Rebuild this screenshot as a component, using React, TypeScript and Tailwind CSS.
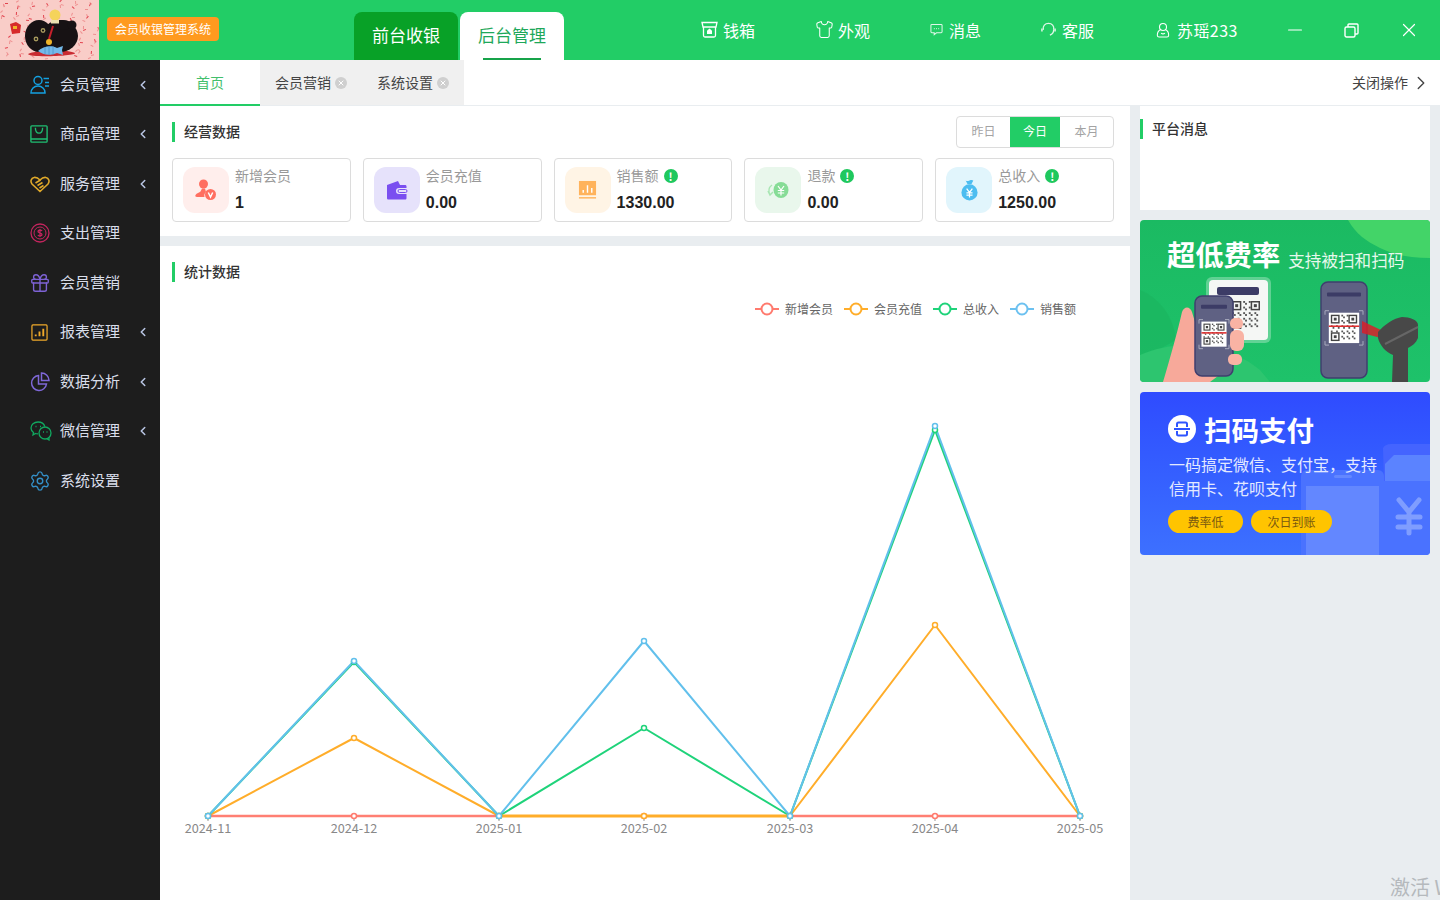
import { Minus, X, ChevronRight, ChevronLeft, Shirt, Settings, Gift } from 'lucide-react';
import type { ReactNode } from 'react';

const confetti = Array.from({ length: 110 }, (_, i) => ({
  x: (i * 37 + 5) % 99,
  y: (i * 23 + 3) % 60,
  r: (i * 31) % 360,
}));

const CatLogo = () => (
  <svg viewBox="0 0 99 60" className="w-[99px] h-[60px] shrink-0 block">
    <rect width="99" height="60" fill="#f9cdc8" />
    {confetti.map((c, i) => (
      <rect
        key={i}
        x={c.x}
        y={c.y}
        width="3"
        height="1"
        fill={i % 3 === 0 ? '#e2434f' : '#ee9090'}
        transform={`rotate(${c.r} ${c.x} ${c.y})`}
      />
    ))}
    <path d="M10 24l6-2 5 3-1 8-8 1z" fill="#d62a2a" />
    <rect x="13" y="26" width="4" height="3" fill="#f0b429" />
    <path d="M28 54c6-4 40-5 47-1 2 3-46 5-47 1z" fill="#c92b32" />
    <ellipse cx="39" cy="36" rx="14" ry="16" fill="#171214" />
    <ellipse cx="60" cy="36" rx="18" ry="16" fill="#171214" />
    <ellipse cx="62" cy="25" rx="11" ry="5" fill="#171214" />
    <circle cx="72" cy="25" r="4.500" fill="#171214" />
    <circle cx="43" cy="30.500" r="2.400" fill="#a89a5e" /><circle cx="43" cy="30.500" r="1.100" fill="#111" />
    <circle cx="36" cy="39" r="2.400" fill="#a89a5e" /><circle cx="36" cy="39" r="1.100" fill="#111" />
    <path d="M53 26l-4 13" stroke="#c8202c" strokeWidth="2" />
    <circle cx="49" cy="42" r="3" fill="#f0b429" />
    <circle cx="55" cy="15" r="5.500" fill="#f5d35a" /><rect x="51" y="20" width="8" height="3.500" fill="#e9e2b0" />
    <path d="M38 51c5-5 14-6 19-3l6-2-1 4 1 5-6-2c-7 3-14 2-19-2z" fill="#74b9ea" />
    <path d="M45 47v7M49 46v9M53 46v9" stroke="#4f93c9" strokeWidth="0.800" />
  </svg>
);

const DrawerIcon = () => (
  <svg viewBox="0 0 17 17" className="w-[17px] h-[17px]" fill="none" stroke="#fff" strokeWidth="1.300">
    <path d="M1 1.500h15l-1 4.500H2z" />
    <path d="M2.500 6v8.500a1.500 1.500 0 0 0 1.500 1.500h9a1.500 1.500 0 0 0 1.500-1.500V6" />
    <path d="M8.500 7.500l2.500 2.200v3.300H6V9.700z" fill="#fff" stroke="none" />
  </svg>
);
const ChatIcon = () => (
  <svg viewBox="0 0 14 14" className="w-[13px] h-[13px]" fill="none" stroke="#dff7e8" strokeWidth="1.100">
    <path d="M2 1.500h10a1 1 0 0 1 1 1v7a1 1 0 0 1-1 1H7l-2.500 2v-2H2a1 1 0 0 1-1-1v-7a1 1 0 0 1 1-1z" />
    <path d="M4.200 6h.8M6.600 6h.8M9 6h.8" strokeWidth="1.300" />
  </svg>
);
const HeadsetIcon = () => (
  <svg viewBox="0 0 16 16" className="w-[15px] h-[15px]" fill="none" stroke="#dff7e8" strokeWidth="1.400">
    <path d="M2.500 8.500C1.500 4 4.500 1.500 8 1.500s6.500 2.500 5.500 7" />
    <path d="M13.500 8.500c0 2.800-1.500 4.500-4 5.500" />
    <path d="M1 7v3M15 7v3" strokeWidth="1.600" />
  </svg>
);
const PersonIcon = () => (
  <svg viewBox="0 0 16 18" className="w-[14px] h-[16px]" fill="none" stroke="#fff" strokeWidth="1.200">
    <circle cx="8" cy="5.500" r="4" />
    <path d="M5.500 8.500C3 9.500 1.500 12 1.500 15c0 1.500 1 2 2 2h9c1 0 2-.5 2-2 0-3-1.500-5.500-4-6.500" />
    <path d="M5.800 12.500c1.200 1 3.200 1 4.400 0" />
  </svg>
);
const RestoreIcon = () => (
  <svg viewBox="0 0 15 15" className="w-[15px] h-[15px]" fill="none" stroke="#fff" strokeWidth="1.400">
    <rect x="1" y="4" width="10" height="10" rx="1.500" />
    <path d="M4 4V2a1 1 0 0 1 1-1h8a1 1 0 0 1 1 1v8a1 1 0 0 1-1 1h-2" />
  </svg>
);

const sideIcons: Record<string, ReactNode> = {
  member: (
    <svg viewBox="0 0 20 20" className="w-5 h-5" fill="none" stroke="#14a0e0" strokeWidth="1.500">
      <circle cx="8" cy="5.500" r="4" />
      <path d="M1 18c0-4 3-7 7-7s7 3 7 6.500V18z" />
      <path d="M13.500 3.500H19M15 7.500h4M15 11h4" />
    </svg>
  ),
  goods: (
    <svg viewBox="0 0 20 20" className="w-[18px] h-[18px]" fill="none" stroke="#1fbf72" strokeWidth="1.500">
      <rect x="1" y="1" width="18" height="18" rx="1" />
      <path d="M1 15.500h18M6 3c0 8 8 8 8 0" />
    </svg>
  ),
  service: (
    <svg viewBox="0 0 20 20" className="w-5 h-5" fill="none" stroke="#e0a92a" strokeWidth="1.600">
      <path d="M10 17.500L2 10c-2-2.500-.8-6 2-6.500 2.300-.5 4 .5 6 2.500 2-2 3.800-3 6-2.500 2.800.5 4 4 2 6.500z" />
      <path d="M5.500 9l5-3M7.500 11.500l5-3M9.500 14l4-2.500" />
    </svg>
  ),
  expense: (
    <svg viewBox="0 0 20 20" className="w-5 h-5" fill="none" stroke="#c3255e" strokeWidth="1.300">
      <circle cx="10" cy="10" r="9" />
      <circle cx="10" cy="10" r="6" strokeWidth="1" />
      <path d="M12 8c-.5-1-3.500-1.300-4 .2-.5 2 4 1.500 4 3.500 0 1.500-3.500 1.500-4 .2M10 6v8" />
    </svg>
  ),
  gift: <Gift size={22} color="#7d62d4" strokeWidth={1.500} className="-ml-[1px]" />,
  report: (
    <svg viewBox="0 0 18 18" className="w-[17px] h-[17px] ml-[1px]" fill="none" stroke="#efa92a" strokeWidth="1.300">
      <rect x="1" y="1" width="16" height="16" rx="1" />
      <path d="M5 13v-2M9 13V8M13 13V5" strokeWidth="2" />
    </svg>
  ),
  pie: (
    <svg viewBox="0 0 20 20" className="w-5 h-5" fill="none" stroke="#7f68d8" strokeWidth="1.500">
      <path d="M8.500 3.500a7.500 7.500 0 1 0 8 8.500H8.500z" />
      <path d="M11.500 1v7.500H19A7.500 7.500 0 0 0 11.500 1z" />
    </svg>
  ),
  wechat: (
    <svg viewBox="0 0 22 20" className="w-[22px] h-5" fill="none" stroke="#11a860" strokeWidth="1.300">
      <path d="M8 1C4 1 1 3.700 1 7c0 2 1 3.500 2.500 4.500L3 14l2.500-1.500c1 .3 1.700.4 2.500.4" />
      <path d="M8 1c3.300 0 6 1.800 6.800 4.500" />
      <circle cx="15" cy="12" r="6" />
      <path d="M19 16.500v2.500l-2.500-1.500" />
      <path d="M5.500 5.500h1M10 5.500h1M13 11h1M16.500 11h1" strokeWidth="1.600" />
    </svg>
  ),
  settings: <Settings size={22} color="#3490c8" strokeWidth={1.500} className="-ml-[1px]" />,
};

const menu = [
  { label: '会员管理', icon: 'member', arrow: true },
  { label: '商品管理', icon: 'goods', arrow: true },
  { label: '服务管理', icon: 'service', arrow: true },
  { label: '支出管理', icon: 'expense', arrow: false },
  { label: '会员营销', icon: 'gift', arrow: false },
  { label: '报表管理', icon: 'report', arrow: true },
  { label: '数据分析', icon: 'pie', arrow: true },
  { label: '微信管理', icon: 'wechat', arrow: true },
  { label: '系统设置', icon: 'settings', arrow: false },
];

const TabClose = () => (
  <span className="w-3 h-3 rounded-full bg-[#cfcfcf] flex items-center justify-center ml-1">
    <X size={8} color="#fff" strokeWidth={3} />
  </span>
);

const stats: { label: string; value: string; box: string; info: boolean; icon: ReactNode }[] = [
  {
    label: '新增会员', value: '1', box: 'bg-[#ffeeec]', info: false,
    icon: (
      <svg viewBox="0 0 22 22" className="w-[22px] h-[22px]" fill="#ff6f61">
        <circle cx="8.500" cy="5" r="4.500" />
        <path d="M7 9.500h3l1 3.500c-1.500 1-2 3-1.500 5H2c-1.500 0-2-1-1.500-2 1-2 4-2.500 5-3.500z" />
        <circle cx="15.500" cy="15.500" r="5.500" />
        <path d="M13.300 13.500l2.200 4.500 2.200-4.500" fill="none" stroke="#fff" strokeWidth="1.500" />
      </svg>
    ),
  },
  {
    label: '会员充值', value: '0.00', box: 'bg-[#e6e2fb]', info: false,
    icon: (
      <svg viewBox="0 0 22 20" className="w-[22px] h-5" fill="#7a4ff0">
        <path d="M1 5l11-4 2 4h5c1 0 1.500.5 1.500 1.500V8H13a3 3 0 0 0 0 6h7.500v4c0 1-.5 1.500-1.500 1.500H2.500C1.500 19.500 1 19 1 18z" />
        <rect x="12" y="9.500" width="9" height="3" rx="1.500" fill="none" stroke="#7a4ff0" strokeWidth="1" />
      </svg>
    ),
  },
  {
    label: '销售额', value: '1330.00', box: 'bg-[#fff4e5]', info: true,
    icon: (
      <svg viewBox="0 0 20 20" className="w-[19px] h-[20px]">
        <rect x="1" y="0.500" width="18" height="15" fill="#ffb35c" />
        <path d="M5.500 13v-3M10 13V5M14.500 13V8" stroke="#fff" strokeWidth="1.500" />
        <rect x="1" y="17.500" width="18" height="1.500" fill="#ffb35c" />
      </svg>
    ),
  },
  {
    label: '退款', value: '0.00', box: 'bg-[#e9f7ec]', info: true,
    icon: (
      <svg viewBox="0 0 22 18" className="w-[22px] h-[18px]">
        <path d="M5 4C2 6 1 10 3 14M1 10l2 4 3-3" fill="none" stroke="#a8e6b3" strokeWidth="1.500" />
        <ellipse cx="14" cy="9" rx="7.500" ry="8" fill="#86dc96" />
        <path d="M11 5l3 4 3-4M10.800 9.500h6.400M10.800 12h6.400M14 9v5.500" fill="none" stroke="#fff" strokeWidth="1.200" />
      </svg>
    ),
  },
  {
    label: '总收入', value: '1250.00', box: 'bg-[#e1f5fc]', info: true,
    icon: (
      <svg viewBox="0 0 20 22" className="w-[19px] h-[22px]">
        <path d="M6 1c1 .8 2 .8 4 0s3-.5 4 0l-2 4H8z" fill="#4dbdf0" />
        <circle cx="10" cy="13.500" r="8.500" fill="#4dbdf0" />
        <path d="M7 9.500l3 4 3-4M6.800 14h6.400M6.800 16.500h6.400M10 13.500V19" fill="none" stroke="#fff" strokeWidth="1.300" />
      </svg>
    ),
  },
];

const legend = [
  { label: '新增会员', color: '#ff7a6e' },
  { label: '会员充值', color: '#ffad2a' },
  { label: '总收入', color: '#1fd37a' },
  { label: '销售额', color: '#6cc1f0' },
];

const xs = [208, 354, 499, 644, 790, 935, 1080];
const labels = ['2024-11', '2024-12', '2025-01', '2025-02', '2025-03', '2025-04', '2025-05'];
const series = [
  { color: '#ffad2a', ys: [816, 738, 816, 816, 816, 625, 816] },
  { color: '#1fd37a', ys: [816, 662, 816, 728, 816, 430, 816] },
  { color: '#62c0ec', ys: [816, 661, 816, 641, 816, 426, 816] },
];

const Chart = () => (
  <svg viewBox="160 330 970 510" className="block w-[970px] h-[510px]">
    {xs.map((x) => (
      <line key={x} x1={x} x2={x} y1="816" y2="821" stroke="#999" strokeWidth="1" />
    ))}
    {series.map((s) => (
      <polyline
        key={s.color}
        points={s.ys.map((y, i) => `${xs[i]},${y}`).join(' ')}
        fill="none"
        stroke={s.color}
        strokeWidth="2"
        strokeLinejoin="round"
      />
    ))}
    <path d="M208 816L499 816M790 816L1080 816" stroke="#ff7f73" strokeWidth="2.500" fill="none" />
    <path d="M499 816L790 816" stroke="#ffad2a" strokeWidth="3" fill="none" />
    {xs.map((x) => (
      <circle key={x} cx={x} cy="816" r="2.500" fill="#fff" stroke="#ff7a6e" strokeWidth="1.500" />
    ))}
    {series.map((s) =>
      s.ys.map((y, i) => (
        <circle key={s.color + i} cx={xs[i]} cy={y} r="2.500" fill="#fff" stroke={s.color} strokeWidth="1.500" />
      )),
    )}
    {xs.map((x, i) => (
      <text key={x} x={x} y="833" textAnchor="middle" fontSize="12.700" fill="#888">
        {labels[i]}
      </text>
    ))}
  </svg>
);

const Heading = ({ title }: { title: string }) => (
  <div className="flex items-center h-5 border-l-[3px] border-[#22cd66] pl-[9px]">
    <span className="text-sm leading-5 pb-[2px] font-medium text-[#333]">{title}</span>
  </div>
);

// 假二维码,只画个大概
const Qr = ({ x, y, s }: { x: number; y: number; s: number }) => {
  const u = s / 15;
  const cells: ReactNode[] = [];
  for (let r = 0; r < 15; r++) {
    for (let c = 0; c < 15; c++) {
      const corner = (r < 5 && c < 5) || (r < 5 && c > 9) || (r > 9 && c < 5);
      if (!corner && (r * 7 + c * 13 + r * c) % 3 === 0) {
        cells.push(<rect key={`${r}-${c}`} x={x + c * u} y={y + r * u} width={u} height={u} fill="#555" />);
      }
    }
  }
  const finders = [
    [x, y],
    [x + 10 * u, y],
    [x, y + 10 * u],
  ];
  return (
    <g>
      {cells}
      {finders.map(([fx, fy]) => (
        <g key={`${fx}-${fy}`}>
          <rect x={fx + u * 0.4} y={fy + u * 0.4} width={u * 4.2} height={u * 4.2} fill="none" stroke="#444" strokeWidth={u * 0.8} />
          <rect x={fx + u * 1.7} y={fy + u * 1.7} width={u * 1.6} height={u * 1.6} fill="#444" />
        </g>
      ))}
    </g>
  );
};

const Phone = ({ x, y, w, h }: { x: number; y: number; w: number; h: number }) => {
  const pad = w * 0.17;
  const qr = w - pad * 2;
  const top = y + h * 0.32;
  return (
    <g>
      <rect x={x} y={y} width={w} height={h} rx="7" fill="#5f6183" stroke="#3f3f6e" strokeWidth="1.500" />
      <rect x={x + 6} y={y + h * 0.11} width={w - 12} height="4" rx="1" fill="#3c3c66" />
      <rect x={x + pad} y={top} width={qr} height={qr} fill="#fff" />
      <Qr x={x + pad + 2} y={top + 2} s={qr - 4} />
      <rect x={x + pad} y={top + qr * 0.42} width={qr} height="1.500" fill="#e02a2a" />
      <path
        d={`M${x + 4} ${top + 2}v-4h4M${x + w - 8} ${top - 2}h4v4M${x + 4} ${top + qr - 2}v4h4M${x + w - 8} ${top + qr + 2}h4v-4`}
        fill="none"
        stroke="#a8aabd"
        strokeWidth="1"
      />
    </g>
  );
};

const GreenBanner = () => (
  <div className="relative h-[162px] overflow-hidden rounded-sm bg-gradient-to-b from-[#1bba62] to-[#1ec26a]">
    <svg viewBox="0 0 290 162" className="absolute inset-0 w-[290px] h-[162px]">
      <path d="M208 0h82v38c-20 0-36-3-50-10-14-7-24-14-32-28z" fill="#43d468" />
      <path d="M0 70c20 8 34 28 36 50L0 140z" fill="#1bb560" opacity="0.7" />
      <path d="M0 135c40-18 90-10 120 15l10 12H0z" fill="#2dc56f" />
      <rect x="66" y="57" width="65" height="66" rx="6" fill="#fff" opacity="0.3" />
      <rect x="69" y="60" width="59" height="60" rx="4" fill="#f5f7f5" />
      <rect x="77" y="67" width="42" height="8" rx="2" fill="#3c3c66" />
      <Qr x={92} y={81} s={28} />
      <path d="M23 162c6-20 14-48 19-70 2-6 8-6 10 0l3 10 23 54-8 6z" fill="#f7a99a" />
      <Phone x={55} y={76} w={38} h={80} />
      <rect x="90" y="98" width="13" height="11" rx="5" fill="#f9b3a4" />
      <rect x="90" y="110" width="14" height="21" rx="6" fill="#f9b3a4" />
      <rect x="88" y="134" width="14" height="11" rx="5" fill="#f9b3a4" />
      <Phone x={181} y={62} w={46} h={96} />
      <path d="M222 101l19 9v8l-19-5z" fill="#d81f2a" opacity="0.85" />
      <path d="M238 112c6-7 16-14 24-15 8 0 16 3 16 8v13c-2 5-6 8-10 10v34h-16l1-27c-7-3-13-9-15-17z" fill="#484848" />
      <path d="M245 124l33-17" stroke="#666" strokeWidth="2" />
    </svg>
    <div className="relative flex items-end pl-[27px] pt-[16px] text-white">
      <span className="text-[28.300px] leading-[36px] font-bold">超低费率</span>
      <span className="ml-2 text-[16.600px] leading-[24px] text-[#e6f8ec]">支持被扫和扫码</span>
    </div>
  </div>
);

const BlueBanner = () => (
  <div className="relative h-[163px] overflow-hidden rounded-sm bg-gradient-to-b from-[#2f4bff] to-[#3d70ff]">
    <svg viewBox="0 0 290 163" className="absolute inset-0 w-[290px] h-[163px]">
      <path d="M243 56c2-3 4-4 8-4h39v37h-46z" fill="#4464ff" />
      <path d="M254 63h36v26h-45v-17z" fill="#5b83ff" />
      <rect x="244" y="89" width="46" height="74" fill="#4a72ff" />
      <path d="M161 84a6 6 0 0 1 6-6h71a6 6 0 0 1 6 6v79H161z" fill="#4a72ff" />
      <rect x="166" y="94" width="73" height="69" fill="#6387ff" />
      <rect x="194" y="83" width="18" height="3" rx="1.500" fill="#6387ff" />
      <path d="M259 108l10 12 10-12M258 125h22M258 135h22M269 122v19" fill="none" stroke="#7f9dff" strokeWidth="5" strokeLinecap="round" />
    </svg>
    <div className="relative pl-[28px] pt-[18px]">
      <div className="flex items-center">
        <svg viewBox="0 0 28 28" className="w-7 h-7">
          <circle cx="14" cy="14" r="14" fill="#fff" />
          <path d="M9 12V9a1.500 1.500 0 0 1 1.500-1.500h7A1.500 1.500 0 0 1 19 9v3M9 16v3a1.500 1.500 0 0 0 1.500 1.500h7A1.500 1.500 0 0 0 19 19v-3M6 14h16" fill="none" stroke="#2f55ff" strokeWidth="2" />
        </svg>
        <span className="ml-2 text-[27.500px] leading-[38px] font-bold text-white">扫码支付</span>
      </div>
      <p className="mt-[4px] pl-[1px] text-base leading-6 text-[#e3e9ff]">
        {'一码搞定微信、支付宝\uFF0C支持'}
        <br />
        信用卡、花呗支付
      </p>
      <div className="flex gap-2 mt-[10px]">
        <span className="w-[75px] h-[23px] rounded-full bg-[#ffc400] text-xs leading-[23px] text-center text-[#7a5a10]">费率低</span>
        <span className="w-[81px] h-[23px] rounded-full bg-[#ffc400] text-xs leading-[23px] text-center text-[#7a5a10]">次日到账</span>
      </div>
    </div>
  </div>
);

export default function App() {
  return (
    <div className="relative w-[1440px] h-[900px] overflow-hidden bg-[#e9edf0] font-['Noto_Sans_CJK_SC','Liberation_Sans',sans-serif]">
      <header className="h-[60px] bg-[#22cd66] flex items-start">
        <CatLogo />
        <div className="ml-2 mt-[17px] w-[112px] h-6 rounded bg-[#ff9a1f] text-xs leading-6 text-center text-white">会员收银管理系统</div>
        <div className="ml-[135px] mt-3 flex gap-[2px]">
          <div className="w-[104px] h-12 rounded-t-lg bg-[#08a127] text-[17px] leading-[46px] text-center text-white">前台收银</div>
          <div className="relative w-[104px] h-12 rounded-t-lg bg-white text-[17px] leading-[46px] text-center text-[#1ea85a]">
            后台管理
            <div className="absolute left-[23px] bottom-0 w-[58px] h-[2px] bg-[#16a34a]" />
          </div>
        </div>
        <nav className="ml-[137px] h-[59px] flex items-center text-base text-white">
          <div className="flex items-center gap-[5px]"><DrawerIcon />钱箱</div>
          <div className="ml-[60px] flex items-center gap-[4px]"><Shirt size={19} strokeWidth={1.300} />外观</div>
          <div className="ml-[60px] flex items-center gap-[6px]"><ChatIcon />消息</div>
          <div className="ml-[60px] flex items-center gap-[6px]"><HeadsetIcon />客服</div>
          <div className="ml-[62px] flex items-center gap-[7px]"><PersonIcon /><span className="tracking-[0.4px]">苏瑶233</span></div>
        </nav>
        <div className="ml-[46px] h-[60px] flex items-center text-white">
          <Minus size={22} strokeWidth={1.300} />
          <div className="ml-[38px]"><RestoreIcon /></div>
          <X size={22} strokeWidth={1.300} className="ml-[39px]" />
        </div>
      </header>

      <div className="flex h-[840px]">
        <aside className="w-40 shrink-0 bg-[#1d1d1d]">
          {menu.map((m) => (
            <div key={m.label} className="relative h-[49.500px] flex items-center text-[15px] text-[#d9deea]">
              <div className="w-[60px] pl-[30px] flex items-center">{sideIcons[m.icon]}</div>
              <span className="pb-[2px]">{m.label}</span>
              {m.arrow && <ChevronLeft size={14} strokeWidth={2.600} color="#b9c6e4" className="ml-[16px]" />}
            </div>
          ))}
        </aside>

        <div className="w-[1280px]">
          <div className="h-[46px] bg-white border-b border-[#e9edf0] flex items-stretch text-sm">
            <div className="w-[100px] h-[46px] border-b-2 border-[#22cd66] text-[#43bf6c] flex items-center justify-center">首页</div>
            <div className="w-[204px] bg-[#f0f0f0] flex items-center pl-[15px] text-[#444]">
              <span className="pb-[2px]">会员营销</span>
              <TabClose />
              <span className="ml-[30px] pb-[2px]">系统设置</span>
              <TabClose />
            </div>
            <div className="ml-auto flex items-center pr-[8px] text-[#444]">
              <span className="pb-[2px]">关闭操作</span>
              <ChevronRight size={22} strokeWidth={1.500} className="ml-[2px]" />
            </div>
          </div>

          <div className="flex gap-[10px] h-[794px]">
            <main className="w-[970px] flex flex-col gap-[10px]">
              <section className="h-[130px] bg-white pt-[10px] pl-3 pr-4">
                <div className="flex items-center justify-between h-8">
                  <Heading title="经营数据" />
                  <div className="flex h-8 border border-[#dcdcdc] rounded text-xs text-[#a3a3a3]">
                    <div className="w-[53px] pb-[2px] flex items-center justify-center">昨日</div>
                    <div className="w-[50px] pb-[2px] flex items-center justify-center bg-[#22cd66] text-white">今日</div>
                    <div className="w-[53px] pb-[2px] flex items-center justify-center">本月</div>
                  </div>
                </div>
                <div className="grid grid-cols-5 gap-3 mt-[10px]">
                  {stats.map((s) => (
                    <div key={s.label} className="h-16 border border-[#dcdcdc] rounded flex items-center pl-[10px]">
                      <div className={`w-[46px] h-[46px] rounded-xl flex items-center justify-center ${s.box}`}>{s.icon}</div>
                      <div className="ml-[6px] -mt-[2px]">
                        <div className="flex items-center h-5 text-sm leading-5 text-[#999]">
                          {s.label}
                          {s.info && (
                            <span className="ml-[5px] mt-[2px] w-[14px] h-[14px] rounded-full bg-[#1fc85e] text-white text-[11px] leading-[14px] font-bold text-center">!</span>
                          )}
                        </div>
                        <div className="mt-[8px] text-base leading-5 font-bold text-[#222] font-['Liberation_Sans',sans-serif]">{s.value}</div>
                      </div>
                    </div>
                  ))}
                </div>
              </section>

              <section className="flex-1 bg-white pt-4 pl-3">
                <Heading title="统计数据" />
                <div className="mt-5 h-[14px] flex justify-end gap-[11px] pr-[54px] -ml-3 text-xs leading-[14px] text-[#666]">
                  {legend.map((l) => (
                    <div key={l.label} className="flex items-center gap-[6px]">
                      <svg viewBox="0 0 24 14" className="w-6 h-[14px]">
                        <path d="M0 7h24" stroke={l.color} strokeWidth="2" />
                        <circle cx="12" cy="7" r="5.500" fill="#fff" stroke={l.color} strokeWidth="2" />
                      </svg>
                      {l.label}
                    </div>
                  ))}
                </div>
                <div className="mt-[14px] -ml-3">
                  <Chart />
                </div>
              </section>
            </main>

            <aside className="w-[290px] flex flex-col gap-[10px]">
              <div className="h-[104px] bg-white pt-[13px]">
                <Heading title="平台消息" />
              </div>
              <GreenBanner />
              <BlueBanner />
            </aside>
          </div>
        </div>
      </div>

      <div className="absolute left-[1390px] top-[873px] whitespace-nowrap text-xl text-[#b5b9bd]">激活 Windows</div>
    </div>
  );
}
